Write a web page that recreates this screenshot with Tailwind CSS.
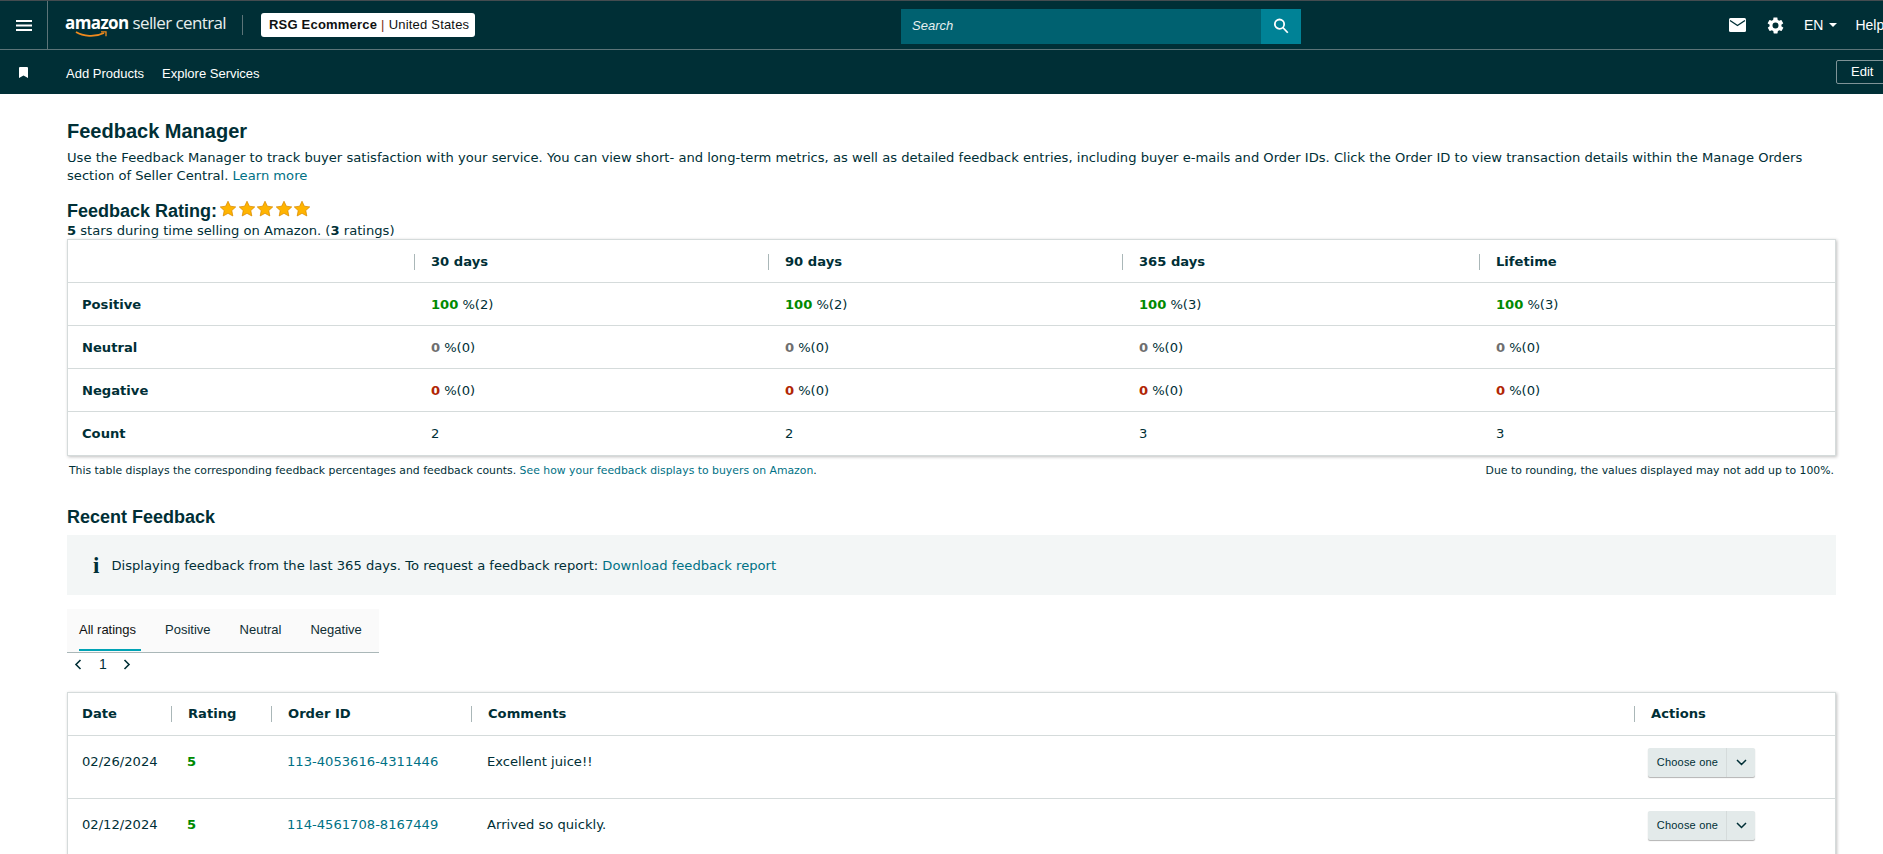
<!DOCTYPE html>
<html lang="en">
<head>
  <meta charset="UTF-8" />
  <title>Feedback Manager</title>
  <script src="https://cdn.jsdelivr.net/npm/@tailwindcss/browser@4"></script>
</head>
<body class="h-screen overflow-hidden bg-white text-[#002f36] font-['DejaVu_Sans',sans-serif] text-[13.12px]">

  <!-- top nav -->
  <header class="bg-[#002f36] border-t border-[#444c50] font-['Liberation_Sans',sans-serif] text-white">
    <div class="h-[49px] flex items-center border-b border-[#5c7478]">
      <div class="shrink-0 w-[48px] h-full flex items-center justify-center border-r border-[#5c7478]">
        <svg class="w-[16px] h-[11px]" viewBox="0 0 16 11" fill="#fff"><rect y="0" width="16" height="2"/><rect y="4.500" width="16" height="2"/><rect y="9" width="16" height="2"/></svg>
      </div>
      <div class="shrink-0 relative ml-[17px] w-[160px] h-[30px] leading-[26px] whitespace-nowrap font-['Open_Sans',sans-serif] text-[17px] tracking-[-0.6px]">
        <span class="font-bold">amazon</span> <span class="font-normal text-[#e8eeee]">seller central</span>
        <svg class="absolute left-[10px] top-[21px] w-[33px] h-[7px]" viewBox="0 0 33 7" fill="none"><path d="M1 1C8 5.500 20 6.500 29 2" stroke="#f08a1d" stroke-width="1.800"/><path d="M26 .8h5v4.500" stroke="#f08a1d" stroke-width="1.300"/></svg>
      </div>
      <div class="shrink-0 ml-[17px] w-px h-[20px] bg-[#5c7478]"></div>
      <div class="shrink-0 ml-[18px] w-[214px] h-[24px] pl-[8px] flex items-center bg-white rounded-[3px] text-[#0f1111] text-[13px] tracking-[0.2px] whitespace-nowrap">
        <span class="font-bold">RSG Ecommerce</span><span class="mx-[4px] text-[#7a2a1a]">|</span><span>United States</span>
      </div>
      <div class="shrink-0 ml-[426px] mt-[2px] flex w-[400px] h-[35px]">
        <div class="flex-1 bg-[#006170] flex items-center pl-[11px] italic text-[#e6f0f1] text-[13px]">Search</div>
        <div class="w-[40px] bg-[#008296] flex items-center justify-center">
          <svg class="w-[18px] h-[18px]" viewBox="0 0 24 24" fill="none" stroke="#fff" stroke-width="2.400"><circle cx="10" cy="9.500" r="6.200"/><path d="M14.500 14l6.500 7"/></svg>
        </div>
      </div>
      <div class="shrink-0 ml-[428px] flex items-center whitespace-nowrap text-[14px]">
        <svg class="w-[17px] h-[14px]" viewBox="0 0 17 14"><rect width="17" height="14" rx="1.500" fill="#fff"/><path d="M1 2.500l7.500 5 7.500-5" fill="none" stroke="#002f36" stroke-width="1.400"/></svg>
        <svg class="ml-[20px] w-[19px] h-[19px]" viewBox="0 0 24 24" fill="#fff"><path fill-rule="evenodd" d="M19.400 13c.1-.3.1-.7.1-1s0-.7-.1-1l2.100-1.600c.2-.2.2-.4.1-.6l-2-3.500c-.1-.2-.4-.3-.6-.2l-2.500 1c-.5-.4-1.100-.7-1.700-1l-.4-2.600c0-.3-.2-.5-.5-.5h-4c-.3 0-.5.2-.5.4l-.4 2.700c-.6.2-1.200.6-1.700 1l-2.500-1c-.2-.1-.5 0-.6.2l-2 3.500c-.1.2-.1.5.1.6L4.600 11c-.1.3-.1.7-.1 1s0 .7.1 1l-2.100 1.600c-.2.2-.2.4-.1.6l2 3.500c.1.2.4.3.6.2l2.500-1c.5.4 1.100.7 1.700 1l.4 2.600c0 .3.2.5.5.5h4c.3 0 .5-.2.5-.4l.4-2.700c.6-.2 1.200-.6 1.700-1l2.500 1c.2.1.5 0 .6-.2l2-3.500c.1-.2.1-.5-.1-.6L19.400 13zM12 15.800a3.800 3.800 0 1 1 0-7.600a3.800 3.800 0 0 1 0 7.600z"/></svg>
        <span class="ml-[19px]">EN</span>
        <span class="ml-[6px] w-0 h-0 border-x-[4px] border-x-transparent border-t-[4px] border-t-white"></span>
        <span class="ml-[18px]">Help</span>
      </div>
    </div>
    <div class="h-[44px] flex items-center relative text-[13px]">
      <svg class="ml-[19px] w-[9px] h-[11px]" viewBox="0 0 9 11" fill="#fff"><path d="M0 1a1 1 0 0 1 1-1h7a1 1 0 0 1 1 1v10L4.500 8.500 0 11z"/></svg>
      <span class="ml-[38px] mt-[3px]">Add Products</span>
      <span class="ml-[18px] mt-[3px]">Explore Services</span>
      <span class="absolute left-[1836px] top-[10px] h-[24px] w-[60px] pl-[14px] leading-[22px] border border-[#7f9397] rounded-[2px]">Edit</span>
    </div>
  </header>

  <main class="px-[67px]">
    <h1 class="mt-[24px] text-[20px] leading-[26px] font-bold font-['Liberation_Sans',sans-serif]">Feedback Manager</h1>
    <p class="mt-[5px] leading-[18px]">Use the Feedback Manager to track buyer satisfaction with your service. You can view short- and long-term metrics, as well as detailed feedback entries, including buyer e-mails and Order IDs. Click the Order ID to view transaction details within the Manage Orders section of Seller Central. <a class="text-[#007185]">Learn more</a></p>

    <div class="mt-[14px] flex items-center h-[24px]">
      <h2 class="text-[18px] font-bold font-['Liberation_Sans',sans-serif]">Feedback Rating:</h2>
      <div class="ml-[2px] -mt-[6px] flex">
        <svg class="w-[18px] h-[17px] mr-[0.5px]" viewBox="-0.5 -0.5 19 18"><path d="M9 .8l2.500 5.300 5.700.7-4.200 3.900 1.100 5.700L9 13.600l-5.100 2.800 1.100-5.700L.8 6.800l5.700-.7z" fill="#ffb400" stroke="#d98a00" stroke-width=".8"/></svg>
        <svg class="w-[18px] h-[17px] mr-[0.5px]" viewBox="-0.5 -0.5 19 18"><path d="M9 .8l2.500 5.300 5.700.7-4.200 3.900 1.100 5.700L9 13.600l-5.100 2.800 1.100-5.700L.8 6.800l5.700-.7z" fill="#ffb400" stroke="#d98a00" stroke-width=".8"/></svg>
        <svg class="w-[18px] h-[17px] mr-[0.5px]" viewBox="-0.5 -0.5 19 18"><path d="M9 .8l2.500 5.300 5.700.7-4.200 3.900 1.100 5.700L9 13.600l-5.100 2.800 1.100-5.700L.8 6.800l5.700-.7z" fill="#ffb400" stroke="#d98a00" stroke-width=".8"/></svg>
        <svg class="w-[18px] h-[17px] mr-[0.5px]" viewBox="-0.5 -0.5 19 18"><path d="M9 .8l2.500 5.300 5.700.7-4.200 3.900 1.100 5.700L9 13.600l-5.100 2.800 1.100-5.700L.8 6.800l5.700-.7z" fill="#ffb400" stroke="#d98a00" stroke-width=".8"/></svg>
        <svg class="w-[18px] h-[17px]" viewBox="-0.5 -0.5 19 18"><path d="M9 .8l2.500 5.300 5.700.7-4.200 3.900 1.100 5.700L9 13.600l-5.100 2.800 1.100-5.700L.8 6.800l5.700-.7z" fill="#ffb400" stroke="#d98a00" stroke-width=".8"/></svg>
      </div>
    </div>
    <p class="mt-[1px] leading-[14px]"><b>5</b> stars during time selling on Amazon. (<b>3</b> ratings)</p>

    <!-- metrics card -->
    <div class="mt-[1px] border border-[#d5dbdb] shadow-[1px_1px_3px_rgba(0,0,0,0.25)] w-[1769px] grid grid-cols-[346px_354px_354px_357px_1fr] [&>div]:h-[43px] [&>div]:flex [&>div]:items-center [&>div]:pt-[1px] [&>div]:border-b [&>div]:border-[#d5dbdb]">
      <div></div>
      <div class="font-bold"><span class="w-px h-[16px] bg-[#aab7b8] mr-[16px]"></span>30 days</div>
      <div class="font-bold"><span class="w-px h-[16px] bg-[#aab7b8] mr-[16px]"></span>90 days</div>
      <div class="font-bold"><span class="w-px h-[16px] bg-[#aab7b8] mr-[16px]"></span>365 days</div>
      <div class="font-bold"><span class="w-px h-[16px] bg-[#aab7b8] mr-[16px]"></span>Lifetime</div>

      <div class="font-bold pl-[14px]">Positive</div>
      <div class="pl-[17px]"><b class="text-[#008a00] mr-1">100</b>%(2)</div>
      <div class="pl-[17px]"><b class="text-[#008a00] mr-1">100</b>%(2)</div>
      <div class="pl-[17px]"><b class="text-[#008a00] mr-1">100</b>%(3)</div>
      <div class="pl-[17px]"><b class="text-[#008a00] mr-1">100</b>%(3)</div>

      <div class="font-bold pl-[14px]">Neutral</div>
      <div class="pl-[17px]"><b class="text-[#6f6f6f] mr-1">0</b>%(0)</div>
      <div class="pl-[17px]"><b class="text-[#6f6f6f] mr-1">0</b>%(0)</div>
      <div class="pl-[17px]"><b class="text-[#6f6f6f] mr-1">0</b>%(0)</div>
      <div class="pl-[17px]"><b class="text-[#6f6f6f] mr-1">0</b>%(0)</div>

      <div class="font-bold pl-[14px]">Negative</div>
      <div class="pl-[17px]"><b class="text-[#b12704] mr-1">0</b>%(0)</div>
      <div class="pl-[17px]"><b class="text-[#b12704] mr-1">0</b>%(0)</div>
      <div class="pl-[17px]"><b class="text-[#b12704] mr-1">0</b>%(0)</div>
      <div class="pl-[17px]"><b class="text-[#b12704] mr-1">0</b>%(0)</div>

      <div class="font-bold pl-[14px] !border-b-0">Count</div>
      <div class="pl-[17px] !border-b-0">2</div>
      <div class="pl-[17px] !border-b-0">2</div>
      <div class="pl-[17px] !border-b-0">3</div>
      <div class="pl-[17px] !border-b-0">3</div>
    </div>

    <div class="mt-[8px] w-[1769px] pl-[2px] pr-[2px] flex justify-between text-[10.85px] leading-[14px]">
      <span>This table displays the corresponding feedback percentages and feedback counts. <a class="text-[#007185]">See how your feedback displays to buyers on Amazon</a>.</span>
      <span>Due to rounding, the values displayed may not add up to 100%.</span>
    </div>

    <h2 class="mt-[27px] text-[18px] leading-[24px] font-bold font-['Liberation_Sans',sans-serif]">Recent Feedback</h2>
    <div class="mt-[6px] w-[1769px] h-[60px] bg-[#f3f6f6] flex items-center pl-[26px]">
      <span class="font-['Liberation_Serif',serif] font-bold text-[23px] leading-none">i</span>
      <span class="ml-[12px] mt-[1px]">Displaying feedback from the last 365 days. To request a feedback report: <a class="text-[#007185]">Download feedback report</a></span>
    </div>

    <div class="mt-[14px] w-[312px] h-[44px] bg-[#fafafa] border-b border-[#aab7b8] flex whitespace-nowrap font-['Liberation_Sans',sans-serif] text-[13px] text-[#0f2e33]">
      <span class="ml-[12px] h-[42px] w-[62px] pt-[11px] border-b-[2px] border-[#00a3b5] text-[#0f1111]">All ratings</span>
      <span class="ml-[24px] pt-[11px]">Positive</span>
      <span class="ml-[29px] pt-[11px]">Neutral</span>
      <span class="ml-[29px] pt-[11px]">Negative</span>
    </div>
    <div class="h-[23px] flex items-center font-['Liberation_Sans',sans-serif] text-[14px]">
      <svg class="ml-[7px] w-[8px] h-[11px]" viewBox="0 0 8 11" fill="none" stroke="#002f36" stroke-width="1.600"><path d="M6.500 1L2 5.500 6.500 10"/></svg>
      <span class="ml-[17px]">1</span>
      <svg class="ml-[16px] w-[8px] h-[11px]" viewBox="0 0 8 11" fill="none" stroke="#002f36" stroke-width="1.600"><path d="M1.500 1L6 5.500 1.500 10"/></svg>
    </div>

    <!-- feedback table -->
    <div class="mt-[16px] border border-[#d5dbdb] shadow-[1px_1px_3px_rgba(0,0,0,0.25)] w-[1769px] grid grid-cols-[103px_100px_200px_1163px_1fr]">
      <div class="h-[43px] flex items-center pl-[14px] font-bold border-b border-[#d5dbdb]">Date</div>
      <div class="h-[43px] flex items-center font-bold border-b border-[#d5dbdb]"><span class="w-px h-[16px] bg-[#aab7b8] mr-[16px]"></span>Rating</div>
      <div class="h-[43px] flex items-center font-bold border-b border-[#d5dbdb]"><span class="w-px h-[16px] bg-[#aab7b8] mr-[16px]"></span>Order ID</div>
      <div class="h-[43px] flex items-center font-bold border-b border-[#d5dbdb]"><span class="w-px h-[16px] bg-[#aab7b8] mr-[16px]"></span>Comments</div>
      <div class="h-[43px] flex items-center font-bold border-b border-[#d5dbdb]"><span class="w-px h-[16px] bg-[#aab7b8] mr-[16px]"></span>Actions</div>

      <div class="h-[63px] pt-[16px] pl-[14px] border-b border-[#d5dbdb]">02/26/2024</div>
      <div class="h-[63px] pt-[16px] pl-[16px] font-bold text-[#008a00] border-b border-[#d5dbdb]">5</div>
      <div class="h-[63px] pt-[16px] pl-[16px] text-[#007185] border-b border-[#d5dbdb]">113-4053616-4311446</div>
      <div class="h-[63px] pt-[16px] pl-[16px] border-b border-[#d5dbdb]">Excellent juice!!</div>
      <div class="h-[63px] pt-[12px] pl-[14px] border-b border-[#d5dbdb]">
        <div class="w-[107px] h-[29px] flex bg-[#e3eaea] rounded-[2px] shadow-[0_1px_1px_rgba(0,0,0,0.3)] font-['Liberation_Sans',sans-serif] text-[11px] tracking-[0.2px]">
          <span class="w-[79px] pl-[1px] border-r border-[#d5dbdb] flex items-center justify-center">Choose one</span>
          <span class="flex-1 flex items-center justify-center"><svg class="w-[11px] h-[7px]" viewBox="0 0 11 7" fill="none" stroke="#002f36" stroke-width="1.500"><path d="M1 1l4.500 4.500L10 1"/></svg></span>
        </div>
      </div>

      <div class="h-[63px] pt-[16px] pl-[14px]">02/12/2024</div>
      <div class="h-[63px] pt-[16px] pl-[16px] font-bold text-[#008a00]">5</div>
      <div class="h-[63px] pt-[16px] pl-[16px] text-[#007185]">114-4561708-8167449</div>
      <div class="h-[63px] pt-[16px] pl-[16px]">Arrived so quickly.</div>
      <div class="h-[63px] pt-[12px] pl-[14px]">
        <div class="w-[107px] h-[29px] flex bg-[#e3eaea] rounded-[2px] shadow-[0_1px_1px_rgba(0,0,0,0.3)] font-['Liberation_Sans',sans-serif] text-[11px] tracking-[0.2px]">
          <span class="w-[79px] pl-[1px] border-r border-[#d5dbdb] flex items-center justify-center">Choose one</span>
          <span class="flex-1 flex items-center justify-center"><svg class="w-[11px] h-[7px]" viewBox="0 0 11 7" fill="none" stroke="#002f36" stroke-width="1.500"><path d="M1 1l4.500 4.500L10 1"/></svg></span>
        </div>
      </div>
    </div>
  </main>
</body>
</html>
